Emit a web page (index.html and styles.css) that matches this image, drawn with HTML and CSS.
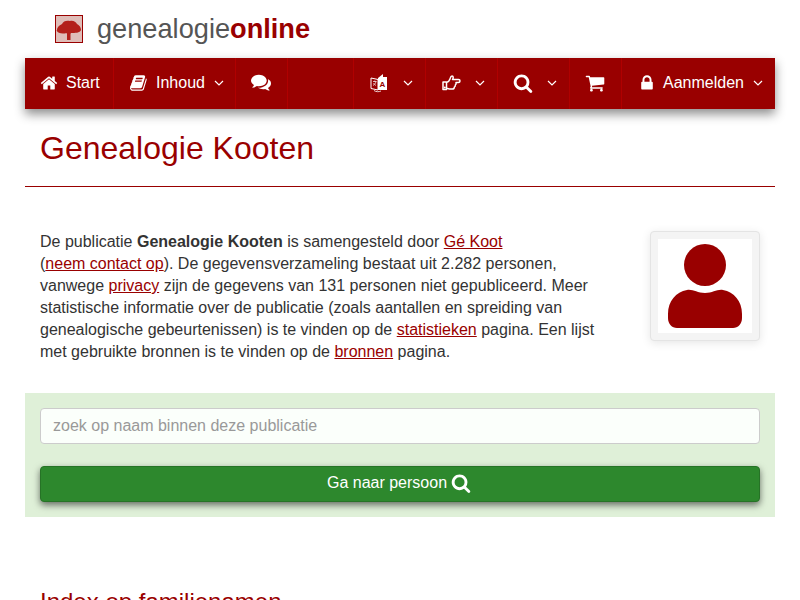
FILE: index.html
```html
<!DOCTYPE html>
<html lang="nl">
<head>
    <meta charset="UTF-8">
    <meta name="viewport" content="width=device-width, initial-scale=1.0">
    <title>Genealogie Kooten</title>
    <link rel="stylesheet" href="styles.css">
</head>
<body>
    <header class="brand">
        <svg class="brand-logo" viewBox="0 0 28 28">
            <rect x="0.5" y="0.5" width="27" height="27" fill="#dfbdb8" stroke="#990000"/>
            <path class="brand-tree" d="M2 15c0-3 3-5 5-6 1-3 5-4 8-3 3-1 6 1 7 3 2 1 4 3 4 6-1 3-6 3-10 3l-.5 1v6h-3.500v-6l-.5-1c-3 1-9 1-10-3z"/>
        </svg>
        <span class="brand-name">genealogie<b>online</b></span>
    </header>

    <nav class="navbar">
        <a class="nav-item nav-start">
            <svg class="icon" viewBox="0 0 1792 1792"><path d="M1472 992v480q0 26-19 45t-45 19h-384v-384h-256v384h-384q-26 0-45-19t-19-45v-480q0-1 .5-3t.5-3l575-474 575 474q1 2 1 6zm223-69l-62 74q-8 9-21 11h-3q-13 0-21-7l-692-577-692 577q-12 8-24 7-13-2-21-11l-62-74q-8-10-7-23.500t11-21.500l719-599q32-26 76-26t76 26l244 204v-195q0-14 9-23t23-9h192q14 0 23 9t9 23v408l219 182q10 8 11 21.500t-7 23.500z"/></svg>
            Start
        </a>
        <a class="nav-item nav-inhoud">
            <svg class="icon" viewBox="0 0 1792 1792"><path d="M1639 478q40 57 18 129l-275 906q-19 64-76.500 107.500t-122.500 43.500h-923q-77 0-148.500-53.500t-99.500-131.500q-24-67-2-127 0-4 3-27t4-37q1-8-3-21.500t-3-19.500q2-11 8-21t16.500-23.500 16.500-23.500q23-38 45-91.500t30-91.500q3-10 .5-30t-.5-28q3-11 17-28t17-23q21-36 42-92t25-90q1-9-2.500-32t.5-28q4-13 22-30.500t22-22.500q19-26 42.500-84.500t27.500-96.500q1-8-3-25.500t-2-26.500q2-8 9-18t18-23 17-21q8-12 16.500-30.500t15-35 16-36 19.500-32 26.500-23.500 36-11.500 47.500 5.500l-1 3q38-9 51-9h761q74 0 114 56t18 130l-274 906q-36 119-71.500 153.500t-128.500 34.500h-869q-27 0-38 15-11 16-1 43 24 70 144 70h923q29 0 56-15.500t35-41.500l300-987q7-22 5-57 38 15 59 43zm-1064 2q-4 13 2 22.500t20 9.500h608q13 0 25.500-9.500t16.500-22.500l21-64q4-13-2-22.500t-20-9.500h-608q-13 0-25.500 9.500t-16.500 22.500zm-83 256q-4 13 2 22.500t20 9.500h608q13 0 25.500-9.500t16.500-22.500l21-64q4-13-2-22.500t-20-9.500h-608q-13 0-25.500 9.500t-16.500 22.500z"/></svg>
            Inhoud
            <svg class="caret" viewBox="0 0 10 6"><path d="M1 1l4 4 4-4"/></svg>
        </a>
        <a class="nav-item nav-chat">
            <svg class="icon icon-wide" viewBox="0 0 1792 1792"><path d="M1408 768q0 139-94 257t-256.500 186.500-353.500 68.500q-86 0-176-16-124 88-278 128-36 9-86 16h-3q-11 0-20.500-8t-11.500-21q-1-3-1-6.500t.5-6.500 2-6l2.500-5 3.500-5.500 4-5 4.500-5 4-4.500q5-6 23-25t26-29.500 22.500-29 25-38.500 20.500-44q-124-72-195-177t-71-224q0-139 94-257t256.500-186.500 353.500-68.500 353.500 68.500 256.500 186.500 94 257zm384 256q0 120-71 224.500t-195 176.500q10 24 20.500 44t25 38.500 22.500 29 26 29.500 23 25q1 1 4 4.500t4.500 5 4 5 3.500 5.500l2.500 5 2 6 .5 6.500-1 6.500q-3 14-13 22t-22 7q-50-7-86-16-154-40-278-128-90 16-176 16-271 0-472-132 58 4 88 4 161 0 309-45t264-129q125-92 192-212t67-254q0-77-23-152 129 71 204 178t75 230z"/></svg>
        </a>

        <div class="nav-right">
            <a class="nav-item">
                <svg class="icon icon-lang" viewBox="0 0 18 20">
                    <path d="M1 5l7 1.500v10.500l-7-1.500z" fill="none" stroke="#fff"/>
                    <path d="M8 5l5-4v3h4v13h-9z"/>
                    <path d="M3 8.500h3.500M4.800 7.500v1M6 8.500c-.5 2-1.500 3-3 4M3.500 10c.5 1 1.500 2 2.500 2.500" fill="none" stroke="#fff" stroke-width=".7"/>
                    <path d="M4 17.500c2 1.500 5 1.500 7 .5" fill="none" stroke="#fff" stroke-width=".8"/>
                    <text class="lang-a" x="9.500" y="13.500">A</text>
                </svg>
                <svg class="caret" viewBox="0 0 10 6"><path d="M1 1l4 4 4-4"/></svg>
            </a>
            <a class="nav-item">
                <svg class="icon icon-hand" viewBox="0 0 20 18">
                    <path d="M1.500 8h3.500v7.500h-3.500zM5 8.500c2-.5 3-2 3.500-3.500.5-1.500 .5-3 2-3 1.500 0 1.500 2 .5 3.500h6c1 0 1.500 .7 1.500 1.500s-.7 1.500-1.800 1.500h-2.200c.3 1 0 2-.7 2.500.2 1-.3 1.800-1 2.200 0 1-.8 1.800-2 1.800h-2.800c-1.500 0-2-.7-3-1" fill="none" stroke="#fff" stroke-width="1.500" stroke-linejoin="round"/>
                    <circle cx="3.300" cy="13.500" r="1"/>
                </svg>
                <svg class="caret" viewBox="0 0 10 6"><path d="M1 1l4 4 4-4"/></svg>
            </a>
            <a class="nav-item">
                <svg class="icon icon-big" viewBox="0 0 1792 1792"><path d="M1216 832q0-185-131.500-316.500t-316.500-131.500-316.500 131.500-131.500 316.500 131.500 316.500 316.500 131.500 316.500-131.500 131.500-316.500zm512 832q0 52-38 90t-90 38q-54 0-90-38l-343-342q-179 124-399 124-143 0-273.500-55.500t-225-150-150-225-55.500-273.500 55.500-273.500 150-225 225-150 273.500-55.500 273.500 55.500 225 150 150 225 55.500 273.500q0 220-124 399l343 343q37 37 37 90z"/></svg>
                <svg class="caret" viewBox="0 0 10 6"><path d="M1 1l4 4 4-4"/></svg>
            </a>
            <a class="nav-item">
                <svg class="icon icon-big" viewBox="0 0 1792 1792"><path d="M704 1536q0 52-38 90t-90 38-90-38-38-90 38-90 90-38 90 38 38 90zm896 0q0 52-38 90t-90 38-90-38-38-90 38-90 90-38 90 38 38 90zm128-1088v512q0 24-16.500 42.500t-40.500 21.500l-1044 122q13 60 13 70 0 16-24 64h920q26 0 45 19t19 45-19 45-45 19h-1024q-26 0-45-19t-19-45q0-11 8-31.500t16-36 21.500-40 15.500-29.500l-177-823h-204q-26 0-45-19t-19-45 19-45 45-19h256q16 0 28.500 6.500t19.500 15.500 13 24.500 8 26 5.500 29.500 4.500 26h1201q26 0 45 19t19 45z"/></svg>
            </a>
            <a class="nav-item nav-login">
                <svg class="icon" viewBox="0 0 1792 1792"><path d="M640 768h512v-192q0-106-75-181t-181-75-181 75-75 181v192zm832 96v576q0 40-28 68t-68 28h-960q-40 0-68-28t-28-68v-576q0-40 28-68t68-28h32v-192q0-184 132-316t316-132 316 132 132 316v192h32q40 0 68 28t28 68z"/></svg>
                Aanmelden
                <svg class="caret" viewBox="0 0 10 6"><path d="M1 1l4 4 4-4"/></svg>
            </a>
        </div>
    </nav>

    <main class="content">
        <h1>Genealogie Kooten</h1>

        <section class="intro">
            <p>De publicatie <b>Genealogie Kooten</b> is samengesteld door <a href="#">Gé Koot</a><br>
            (<a href="#">neem contact op</a>). De gegevensverzameling bestaat uit 2.282 personen, vanwege <a href="#">privacy</a> zijn de gegevens van 131 personen niet gepubliceerd. Meer statistische informatie over de publicatie (zoals aantallen en spreiding van genealogische gebeurtenissen) is te vinden op de <a href="#">statistieken</a> pagina. Een lijst met gebruikte bronnen is te vinden op de <a href="#">bronnen</a> pagina.</p>
            <div class="avatar">
                <svg viewBox="0 0 94 94">
                    <circle cx="47" cy="26" r="21"/>
                    <path d="M29 51c6-1 10 3 18 3s12-4 18-3c11 2 19 11 19 24v4c0 6-4 10-9 10h-56c-5 0-9-4-9-10v-4c0-13 8-22 19-24z"/>
                </svg>
            </div>
        </section>

        <form class="search-box">
            <input class="search-input" type="text" placeholder="zoek op naam binnen deze publicatie">
            <button class="search-btn" type="button">
                Ga naar persoon
                <svg class="icon" viewBox="0 0 1792 1792"><path d="M1216 832q0-185-131.500-316.500t-316.500-131.500-316.500 131.500-131.500 316.500 131.500 316.500 316.500 131.500 316.500-131.500 131.500-316.500zm512 832q0 52-38 90t-90 38q-54 0-90-38l-343-342q-179 124-399 124-143 0-273.500-55.500t-225-150-150-225-55.500-273.500 55.500-273.500 150-225 225-150 273.500-55.500 273.500 55.500 225 150 150 225 55.500 273.500q0 220-124 399l343 343q37 37 37 90z"/></svg>
            </button>
        </form>

        <h2>Index op familienamen</h2>
    </main>
</body>
</html>
```

FILE: styles.css
```css
* {
    box-sizing: border-box;
    margin: 0;
    padding: 0;
}

body {
    font-family: "Liberation Sans", Arial, sans-serif;
    font-size: 16px;
    line-height: 22px;
    color: #333;
    background: #fff;
    padding: 0 25px;
}

.brand {
    display: flex;
    align-items: center;
    height: 58px;
    padding-left: 30px;
}

.brand-logo {
    width: 28px;
    height: 28px;
    margin-right: 14px;
}

.brand-tree {
    fill: #b3201a;
    filter: blur(0.5px);
}

.brand-name {
    font-size: 27.2px;
    color: #555;
}

.brand-name b {
    color: #990000;
}

.navbar {
    display: flex;
    height: 51px;
    background: #990000;
    color: #fff;
    box-shadow: 0 5px 10px rgba(0, 0, 0, 0.45);
}

.nav-right {
    display: flex;
    margin-left: auto;
    border-left: 1px solid #b00000;
}

.nav-item {
    display: flex;
    align-items: center;
    padding: 0 15px 2px;
    border-right: 1px solid #b00000;
}

.nav-start {
    width: 89px;
    padding-right: 0;
}

.nav-inhoud {
    width: 122px;
    padding-left: 16px;
    padding-right: 0;
}

.nav-chat {
    width: 52px;
}

.nav-right .nav-item:nth-child(1),
.nav-right .nav-item:nth-child(2),
.nav-right .nav-item:nth-child(3) {
    width: 72px;
    padding-right: 12px;
}

.nav-right .nav-item:nth-child(4) {
    width: 52px;
}

.nav-right .nav-login {
    border-right: none;
    padding-left: 16px;
    padding-right: 12px;
}

.icon {
    flex-shrink: 0;
    width: 18px;
    height: 18px;
    fill: #fff;
    margin-right: 8px;
}

.icon-wide {
    width: 20px;
    height: 20px;
    margin: 0 0 2px;
}

.nav-right .icon {
    margin-right: 0;
}

.nav-right .icon-big {
    width: 20px;
    height: 20px;
}

.nav-right .nav-login .icon {
    margin-right: 7px;
}

.nav-right .icon-lang {
    width: 18px;
    height: 20px;
    margin-left: 1px;
}

.icon-hand {
    width: 21px;
}

.lang-a {
    font-size: 8px;
    font-weight: bold;
    fill: #990000;
}

.caret {
    flex-shrink: 0;
    width: 10px;
    height: 6px;
    margin-left: 9px;
    fill: none;
    stroke: #fff;
    stroke-width: 1.2;
}

.nav-right .caret {
    margin-left: auto;
}

.nav-right .nav-login .caret {
    margin-left: 9px;
}

.content h1 {
    font-size: 32px;
    font-weight: normal;
    line-height: 40px;
    color: #990000;
    padding: 19px 15px 18px;
    border-bottom: 1px solid #990000;
}

.intro {
    display: flex;
    justify-content: space-between;
    padding: 44px 15px 0;
}

.intro p {
    width: 560px;
}

.intro a {
    color: #990000;
}

.avatar {
    width: 110px;
    height: 110px;
    padding: 7px;
    border: 1px solid #e4e4e4;
    border-radius: 4px;
    background: #f4f4f4;
    box-shadow: 0 2px 10px rgba(0, 0, 0, 0.1);
}

.avatar svg {
    display: block;
    width: 94px;
    height: 94px;
    background: #fff;
    fill: #990000;
}

.search-box {
    margin-top: 30px;
    padding: 15px;
    background: #dff0d8;
}

.search-input {
    display: block;
    width: 100%;
    height: 36px;
    padding: 0 12px;
    font: 16px "Liberation Sans", Arial, sans-serif;
    color: #555;
    background: #fbfffb;
    border: 1px solid #ccc;
    border-radius: 4px;
}

.search-input::placeholder {
    color: #999;
    opacity: 1;
}

.search-btn {
    display: flex;
    align-items: center;
    justify-content: center;
    width: 100%;
    height: 36px;
    margin-top: 22px;
    padding: 0 2px 2px 0;
    font: 16px "Liberation Sans", Arial, sans-serif;
    color: #fff;
    background: #2d882d;
    border: 1px solid #267326;
    border-radius: 4px;
    box-shadow: 0 3px 7px rgba(0, 0, 0, 0.55);
}

.search-btn .icon {
    width: 20px;
    height: 20px;
    margin: 0 0 0 4px;
}

.content h2 {
    margin-top: 70px;
    font-size: 24px;
    font-weight: normal;
    line-height: 30px;
    color: #990000;
    padding: 0 15px;
}
```
